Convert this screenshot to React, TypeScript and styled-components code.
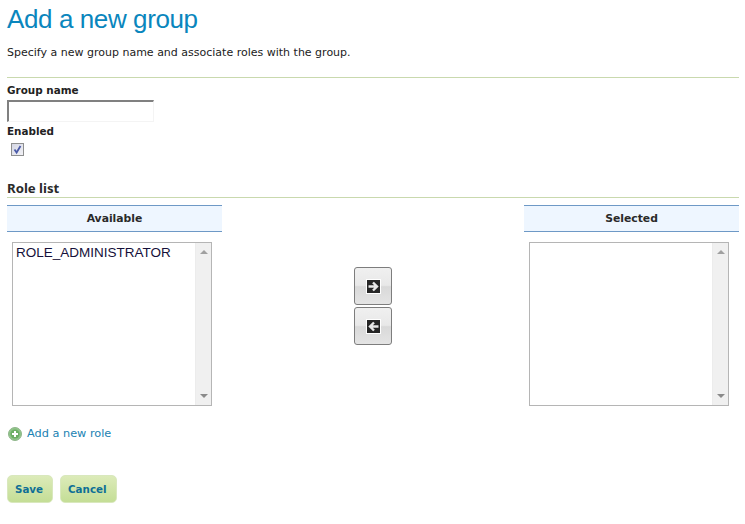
import styled, { createGlobalStyle } from "styled-components";

const GlobalStyle = createGlobalStyle`
  html, body {
    margin: 0;
    padding: 0;
    background: #fff;
    font-family: "DejaVu Sans", Verdana, sans-serif;
  }
`;

const Page = styled.div`
  width: 732px;
  height: 524px;
  padding-left: 7px;
  overflow: hidden;
`;

const Title = styled.h1`
  margin: 0;
  height: 40px;
  font-family: "Liberation Sans", Tahoma, sans-serif;
  font-size: 26px;
  letter-spacing: -0.4px;
  line-height: 38px;
  font-weight: normal;
  color: #0a86bd;
`;

const Description = styled.p`
  margin: 4px 0 0;
  height: 18px;
  font-size: 11px;
  line-height: 18px;
  color: #222;
`;

const Rule = styled.hr`
  margin: 0;
  border: 0;
  height: 1px;
  background: #c9d9ae;
`;

const FormRule = styled(Rule)`
  margin-top: 15px;
`;

const Label = styled.label`
  display: block;
  height: 15px;
  font-size: 10.4px;
  line-height: 15px;
  font-weight: bold;
  color: #222;
`;

const GroupLabel = styled(Label)`
  margin: 5px 0 2px;
`;

const EnabledLabel = styled(Label)`
  margin-top: 2px;
`;

const NameInput = styled.input`
  display: block;
  box-sizing: border-box;
  width: 147px;
  height: 22px;
  margin: 0;
  padding: 0;
  border-style: solid;
  border-width: 2px 1px 1px 2px;
  border-color: #808080 #f4f4f4 #f4f4f4 #808080;
  background: #fff;
`;

const CheckBox = styled.span`
  display: block;
  box-sizing: border-box;
  width: 13px;
  height: 13px;
  margin: 4px 0 0 4px;
  border: 1px solid #8e8f8f;
  background: linear-gradient(135deg, #d4d6e4, #f2f2f6);

  svg {
    display: block;
  }
`;

const RoleTitle = styled.h2`
  margin: 24px 0 0;
  height: 17px;
  font-family: "Noto Sans", Tahoma, sans-serif;
  font-size: 13.2px;
  line-height: 17px;
  font-weight: bold;
  color: #2a2a2a;
`;

const RoleRule = styled(Rule)`
  margin-top: 0;
`;

const RoleColumns = styled.div`
  display: grid;
  grid-template-columns: 215px 1fr 215px;
  margin-top: 7px;
`;

const ColumnHeader = styled.div`
  box-sizing: border-box;
  height: 27px;
  border-top: 1px solid #6e99c6;
  border-bottom: 1px solid #6e99c6;
  background: #eef6ff;
  text-align: center;
  font-size: 10.8px;
  line-height: 25px;
  font-weight: bold;
  color: #2a2a2a;
`;

const ListBox = styled.div`
  box-sizing: border-box;
  display: flex;
  justify-content: space-between;
  width: 200px;
  height: 164px;
  margin: 10px 0 0 5px;
  border: 1px solid #b5b5b5;
  background: #fff;
`;

const Options = styled.div`
  padding: 2px 3px;
  font-family: "Liberation Sans", Arial, sans-serif;
  font-size: 13.5px;
  line-height: 16px;
  color: #15103a;
`;

const ScrollTrack = styled.div`
  display: flex;
  flex-direction: column;
  justify-content: space-between;
  align-items: center;
  width: 16px;
  padding: 7px 0;
  box-sizing: border-box;
  background: #f0f0f0;
  border-left: 1px solid #ececec;
`;

const ScrollArrow = styled.span<{ $up?: boolean }>`
  width: 0;
  height: 0;
  border-left: 4px solid transparent;
  border-right: 4px solid transparent;
  border-bottom: ${(props) => (props.$up ? "4px solid #a0a0a0" : "0")};
  border-top: ${(props) => (props.$up ? "0" : "4px solid #8a8a8a")};
`;

const MoveButtons = styled.div`
  display: flex;
  flex-direction: column;
  align-items: center;
  gap: 2px;
  padding-top: 62px;
`;

const MoveButton = styled.button`
  display: flex;
  align-items: center;
  justify-content: center;
  box-sizing: border-box;
  width: 38px;
  height: 38px;
  padding: 0;
  border: 1px solid #7d7d7d;
  border-radius: 3px;
  background: linear-gradient(#f0f0f0 0%, #e8e8e8 48%, #d9d9d9 52%, #e4e4e4 100%);
`;

const AddRole = styled.a`
  display: flex;
  align-items: center;
  gap: 5px;
  height: 16px;
  margin: 20px 0 0 1px;
  font-size: 11.3px;
  line-height: 16px;
  color: #1a82b3;
`;

const Actions = styled.div`
  display: flex;
  gap: 7px;
  margin-top: 33px;
`;

const ActionButton = styled.button`
  box-sizing: border-box;
  height: 28px;
  padding: 0 9px 0 7px;
  border: 1px solid #d9e8bd;
  border-radius: 5px;
  background: linear-gradient(#dcebb9, #c4de96);
  font-family: inherit;
  font-size: 10.3px;
  font-weight: bold;
  color: #0f6f96;
`;

const ArrowIcon = ({ flip }: { flip?: boolean }) => (
  <svg width="15" height="15" viewBox="0 0 15 15">
    <rect x="0.5" y="0.5" width="14" height="14" fill="#262626" stroke="#fff" />
    <path
      d={flip ? "M12.5 7.5H5M8 3.5 4 7.5l4 4" : "M2.5 7.5H10M7 3.5l4 4-4 4"}
      fill="none"
      stroke="#e8e8e8"
      strokeWidth="2.4"
    />
  </svg>
);

const AddIcon = () => (
  <svg width="14" height="14" viewBox="0 0 14 14">
    <circle cx="7" cy="7" r="6.5" fill="#8fc488" stroke="#8fb58a" />
    <circle cx="7" cy="7" r="4.6" fill="#6cae64" />
    <path d="M7 4v6M4 7h6" stroke="#fff" strokeWidth="2" />
  </svg>
);

const RoleList = ({ items }: { items: string[] }) => (
  <ListBox>
    <Options>
      {items.map((item) => (
        <div key={item}>{item}</div>
      ))}
    </Options>
    <ScrollTrack>
      <ScrollArrow $up />
      <ScrollArrow />
    </ScrollTrack>
  </ListBox>
);

export default function App() {
  return (
    <>
      <GlobalStyle />
      <Page>
        <Title>Add a new group</Title>
        <Description>Specify a new group name and associate roles with the group.</Description>
        <FormRule />
        <GroupLabel>Group name</GroupLabel>
        <NameInput />
        <EnabledLabel>Enabled</EnabledLabel>
        <CheckBox>
          <svg width="11" height="11" viewBox="0 0 11 11">
            <path d="M2.5 5.5 4.6 8.5 8.5 2" fill="none" stroke="#4a5aa8" strokeWidth="1.8" />
          </svg>
        </CheckBox>
        <RoleTitle>Role list</RoleTitle>
        <RoleRule />
        <RoleColumns>
          <div>
            <ColumnHeader>Available</ColumnHeader>
            <RoleList items={["ROLE_ADMINISTRATOR"]} />
          </div>
          <MoveButtons>
            <MoveButton>
              <ArrowIcon />
            </MoveButton>
            <MoveButton>
              <ArrowIcon flip />
            </MoveButton>
          </MoveButtons>
          <div>
            <ColumnHeader>Selected</ColumnHeader>
            <RoleList items={[]} />
          </div>
        </RoleColumns>
        <AddRole>
          <AddIcon />
          Add a new role
        </AddRole>
        <Actions>
          <ActionButton>Save</ActionButton>
          <ActionButton>Cancel</ActionButton>
        </Actions>
      </Page>
    </>
  );
}
